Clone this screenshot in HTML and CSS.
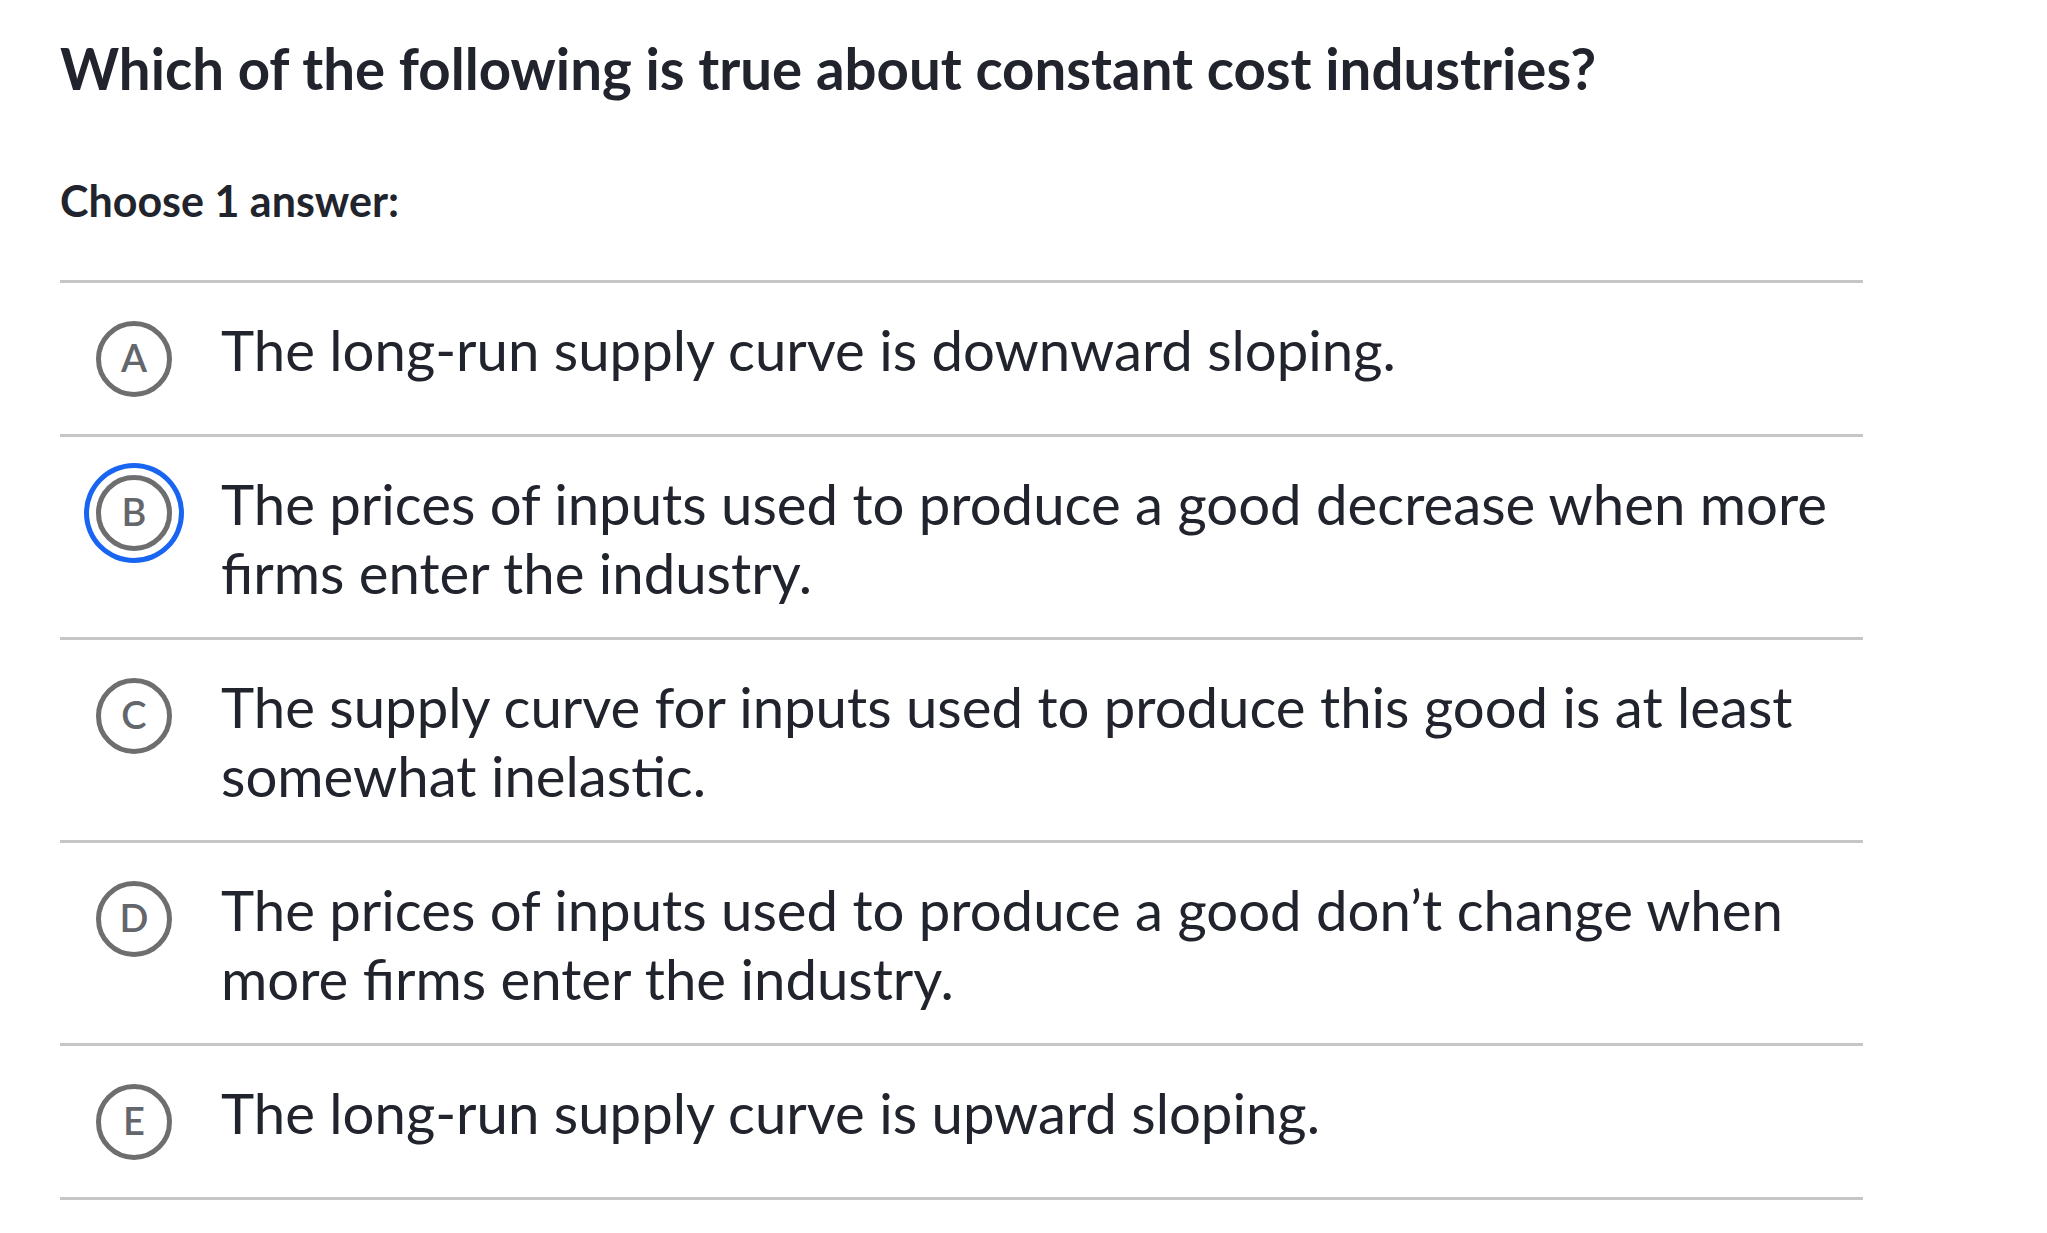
FILE: index.html
```html
<!DOCTYPE html>
<html lang="en">
<head>
<meta charset="utf-8">
<title>Question</title>
<link rel="stylesheet" href="styles.css">
</head>
<body>
<main class="question">
  <h1 class="prompt">Which of the following is true about constant cost industries?</h1>
  <p class="instructions">Choose 1 answer:</p>
  <ul class="choices">
    <li class="choice">
      <span class="bubble">A</span>
      <span class="choice-text">The long-run supply curve is downward sloping.</span>
    </li>
    <li class="choice">
      <span class="bubble bubble-focus">B</span>
      <span class="choice-text">The prices of inputs used to produce a good decrease when more firms enter the industry.</span>
    </li>
    <li class="choice">
      <span class="bubble">C</span>
      <span class="choice-text">The supply curve for inputs used to produce this good is at least somewhat inelastic.</span>
    </li>
    <li class="choice">
      <span class="bubble">D</span>
      <span class="choice-text">The prices of inputs used to produce a good don’t change when more firms enter the industry.</span>
    </li>
    <li class="choice">
      <span class="bubble">E</span>
      <span class="choice-text">The long-run supply curve is upward sloping.</span>
    </li>
  </ul>
</main>
</body>
</html>
```
FILE: styles.css
```css
html, body {
  margin: 0;
  padding: 0;
  background: #ffffff;
}

body {
  font-family: Lato, "Open Sans", "Liberation Sans", sans-serif;
  color: #21242c;
}

.question {
  width: 1803px;
  padding: 34px 0 0 60px;
}

.prompt {
  margin: 0;
  font-size: 56.4px;
  font-weight: 700;
  line-height: normal;
}

.instructions {
  margin: 73px 0 54px;
  font-size: 43px;
  font-weight: 700;
  line-height: normal;
}

.choices {
  list-style: none;
  margin: 0;
  padding: 0;
  border-top: 3px solid #c6c6c6;
}

.choice {
  display: flex;
  align-items: flex-start;
  padding: 32px 0 30px;
  border-bottom: 3px solid #c6c6c6;
}

.bubble {
  flex-shrink: 0;
  box-sizing: border-box;
  width: 76px;
  height: 76px;
  margin: 6px 0 7px 36px;
  padding-bottom: 4px;
  border: 5px solid #6e6e6e;
  border-radius: 50%;
  display: flex;
  align-items: center;
  justify-content: center;
  font-size: 38px;
  font-weight: 600;
  color: #63666b;
  line-height: 1;
}

.bubble-focus {
  box-shadow: 0 0 0 7px #ffffff, 0 0 0 12px #1865f2;
}

.choice-text {
  margin-left: 49px;
  font-size: 56.3px;
  line-height: 69px;
}
```
